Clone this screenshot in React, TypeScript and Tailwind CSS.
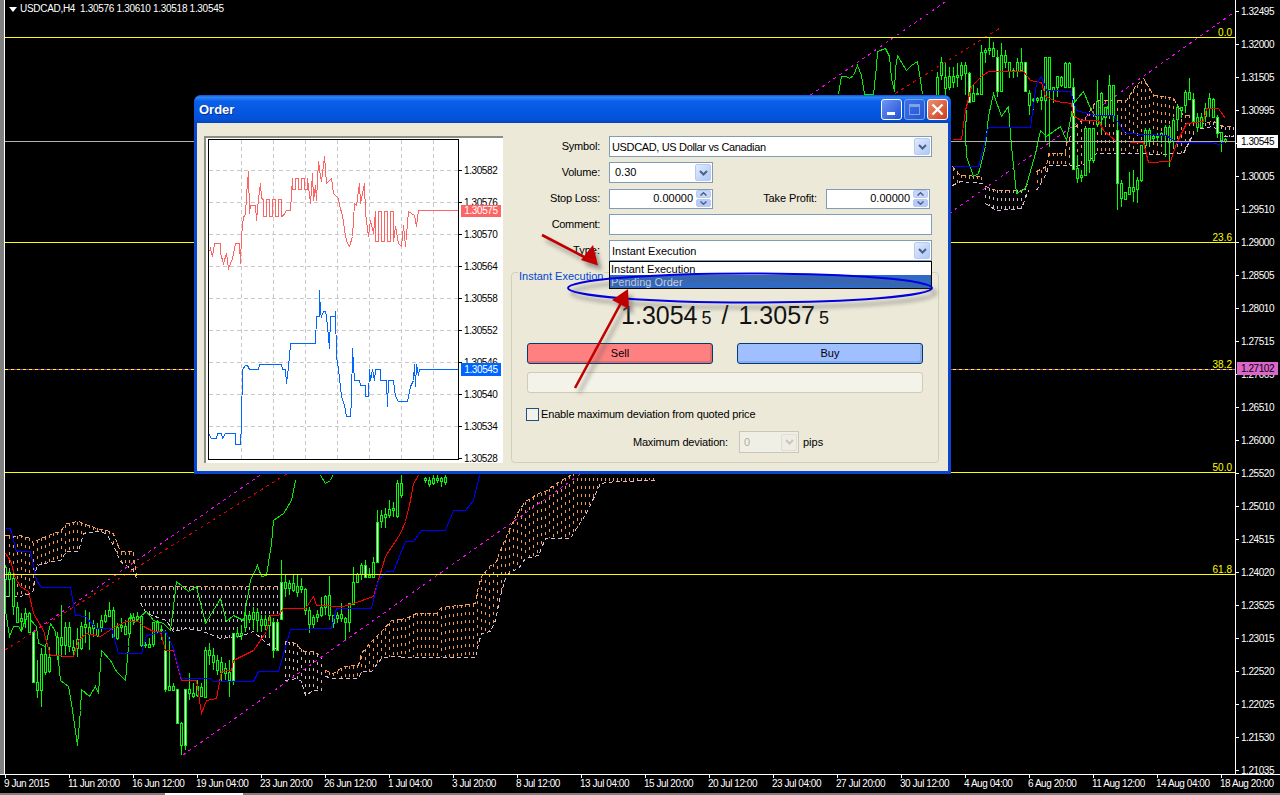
import React from "react";

type Flat = number[];

// chart traces are written in the crop coordinates they were read from (3x), ox/oy moves them back to the page
const pts = (a: Flat, ox: number, oy: number) => {
  const out: string[] = [];
  for (let i = 0; i < a.length; i += 2) {
    out.push(`${Math.floor(ox + a[i] / 3) + 0.5},${Math.floor(oy + a[i + 1] / 3) + 0.5}`);
  }
  return out.join(" ");
};

const zig = (x0: number, x1: number, a: number, b: number, step = 9) => {
  const out: number[] = [];
  let up = true;
  for (let x = x0; x <= x1; x += step) {
    out.push(x, up ? a : b, x, up ? b : a);
    up = !up;
  }
  return out;
};

// the row at 1.305 sits fully under the current price label
const prices = [
  "1.32495", "1.32000", "1.31505", "1.30995", "", "1.30005", "1.29510", "1.29000",
  "1.28505", "1.28010", "1.27515", "1.27005", "1.26510", "1.26000", "1.25520", "1.25010",
  "1.24515", "1.24020", "1.23525", "1.23015", "1.22520", "1.22025", "1.21530", "1.21035",
];

const times = [
  "9 Jun 2015", "11 Jun 20:00", "16 Jun 12:00", "19 Jun 04:00", "23 Jun 20:00", "26 Jun 12:00", "1 Jul 04:00",
  "3 Jul 20:00", "8 Jul 12:00", "13 Jul 04:00", "15 Jul 20:00", "20 Jul 12:00", "23 Jul 04:00", "27 Jul 20:00",
  "30 Jul 12:00", "4 Aug 04:00", "6 Aug 20:00", "11 Aug 12:00", "14 Aug 04:00", "18 Aug 20:00",
];

const miniPrices = ["1.30582", "1.30576", "1.30570", "1.30564", "1.30558", "1.30552", "1.30546", "1.30540", "1.30534", "1.30528"];

// x, high, low, body top, body bottom
const leftCandles: Flat[] = [
  [16, 195, 335, 200, 235], [28, 210, 290, 215, 235], [40, 210, 345, 235, 320], [52, 305, 365, 320, 365],
  [64, 340, 395, 355, 365], [76, 325, 385, 338, 355], [88, 335, 400, 338, 395], [100, 395, 550, 395, 545],
  [112, 480, 595, 545, 570], [124, 445, 620, 462, 570], [136, 440, 525, 462, 515], [148, 440, 520, 472, 515],
  [172, 395, 480, 412, 465], [184, 315, 470, 412, 435], [196, 365, 465, 382, 435], [208, 365, 455, 382, 440],
  [220, 420, 470, 440, 448], [232, 385, 470, 418, 446], [244, 365, 450, 378, 445], [256, 330, 430, 372, 382],
  [268, 335, 450, 380, 400], [280, 360, 410, 375, 385], [292, 370, 410, 385, 405], [304, 345, 395, 360, 380],
  [316, 330, 370, 345, 362], [328, 305, 350, 330, 348], [340, 320, 415, 330, 412], [352, 370, 420, 380, 412],
  [364, 355, 395, 375, 380], [376, 360, 405, 378, 402], [388, 350, 405, 355, 400], [400, 340, 375, 350, 358],
  [412, 335, 365, 348, 358], [424, 345, 440, 348, 435], [436, 425, 445, 433, 437], [448, 415, 445, 432, 440],
  [460, 365, 440, 365, 432], [472, 360, 400, 365, 392], [484, 375, 420, 388, 392], [496, 390, 575, 450, 568],
  [508, 410, 570, 558, 570], [520, 548, 572, 558, 570], [532, 568, 670, 568, 670], [544, 665, 765, 670, 735],
  [556, 568, 750, 568, 735], [568, 520, 600, 568, 580], [580, 550, 595, 580, 590], [592, 540, 590, 558, 585],
  [604, 550, 590, 560, 588], [616, 440, 590, 450, 590], [628, 430, 495, 450, 465], [640, 445, 510, 465, 485],
  [652, 465, 525, 480, 510], [664, 470, 545, 485, 515], [676, 490, 540, 505, 520], [688, 480, 590, 515, 540],
  [700, 400, 555, 400, 540], [712, 385, 415, 400, 410], [724, 375, 420, 400, 405], [736, 335, 395, 345, 380],
  [748, 335, 370, 345, 358], [760, 320, 390, 335, 355], [772, 325, 395, 335, 360], [784, 345, 395, 358, 375],
  [796, 345, 390, 358, 375], [808, 345, 410, 350, 375], [820, 355, 475, 365, 448], [832, 365, 450, 365, 448],
  [844, 180, 360, 245, 355], [856, 225, 290, 245, 262], [868, 240, 285, 248, 262], [880, 225, 275, 250, 272],
  [892, 225, 290, 258, 275], [904, 235, 280, 258, 268], [916, 265, 345, 268, 330], [928, 320, 400, 330, 372],
  [940, 345, 385, 350, 372], [952, 330, 365, 342, 350], [964, 290, 350, 320, 345], [976, 285, 345, 288, 322],
  [988, 228, 360, 285, 345], [1000, 345, 385, 345, 368], [1012, 335, 370, 345, 355], [1024, 310, 365, 342, 355],
  [1036, 350, 420, 355, 368], [1048, 310, 395, 310, 368], [1060, 200, 290, 245, 310], [1072, 220, 250, 222, 245],
  [1084, 190, 240, 195, 222], [1096, 180, 235, 195, 232], [1108, 205, 230, 225, 232], [1120, 170, 225, 185, 230],
  [1132, 30, 190, 65, 185], [1144, 30, 85, 45, 62], [1156, 25, 85, 42, 50], [1168, 0, 55, 28, 46],
  [1180, 5, 50, 25, 32], [1192, -60, 55, -50, 50], [1204, -75, -5, -50, -15], [1276, -70, -50, -65, -58],
  [1288, -70, -40, -60, -48], [1300, -75, -45, -65, -50], [1312, -75, -50, -65, -60], [1324, -70, -40, -65, -55],
  [1336, -75, -45, -70, -55],
];
const leftWhite = [100, 496, 532, 556, 700, 820, 832, 844, 1132, 1096];

const rightCandles: Flat[] = [
  [-8, 215, 285, 230, 285], [4, 170, 240, 185, 225], [16, 190, 290, 230, 262], [28, 200, 270, 228, 260],
  [40, 200, 265, 228, 245], [52, 190, 260, 225, 232], [64, 185, 240, 195, 225], [76, 185, 285, 195, 220],
  [88, 215, 305, 218, 305], [100, 255, 305, 280, 305], [112, 265, 285, 280, 282], [124, 135, 280, 155, 280],
  [136, 145, 190, 150, 155], [148, 115, 165, 145, 150], [160, 125, 170, 145, 170], [172, 150, 290, 170, 272],
  [184, 130, 275, 165, 272], [196, 150, 205, 165, 185], [208, 185, 235, 185, 212], [220, 205, 235, 210, 212],
  [232, 175, 230, 185, 212], [244, 145, 210, 185, 210], [256, 185, 275, 185, 272], [268, 270, 345, 278, 315],
  [280, 295, 330, 298, 302], [292, 290, 310, 295, 300], [304, 270, 330, 292, 300], [316, 170, 425, 172, 300],
  [328, 170, 440, 170, 265], [340, 260, 310, 262, 270], [352, 228, 290, 228, 260], [364, 228, 260, 230, 255],
  [376, 185, 265, 188, 260], [388, 185, 265, 188, 260], [400, 235, 505, 260, 505], [412, 465, 550, 505, 535],
  [424, 510, 545, 525, 532], [436, 380, 525, 385, 525], [448, 385, 520, 385, 480], [460, 385, 490, 385, 480],
  [472, 240, 380, 302, 370], [484, 275, 400, 278, 345], [496, 320, 375, 320, 350], [508, 225, 350, 255, 345],
  [520, 255, 365, 255, 345], [532, 345, 630, 390, 548], [544, 540, 620, 548, 592], [556, 575, 600, 575, 595],
  [568, 515, 585, 560, 580], [580, 510, 605, 560, 572], [592, 530, 610, 540, 568], [604, 435, 545, 435, 540],
  [616, 385, 440, 390, 435], [628, 385, 435, 390, 420], [640, 405, 425, 408, 415], [652, 400, 425, 408, 412],
  [664, 395, 430, 400, 405], [676, 375, 470, 380, 405], [688, 375, 500, 380, 425], [700, 355, 440, 360, 420],
  [712, 315, 390, 320, 355], [724, 320, 355, 320, 330], [736, 270, 340, 275, 315], [748, 235, 300, 275, 295],
  [760, 280, 365, 298, 365], [772, 340, 395, 350, 380], [784, 340, 385, 350, 380], [796, 310, 365, 325, 350],
  [808, 280, 350, 295, 325], [820, 295, 350, 297, 350], [832, 345, 415, 350, 398], [844, 395, 455, 397, 420],
  [856, 415, 430, 418, 425],
];
const rightWhite = [88, 172, 256, 400, 532, 760, 832];

type Cloud = { color: string; ox: number; oy: number; rows: Flat[] };

const clouds: Cloud[] = [
  { color: "#f09858", ox: 0, oy: 500, rows: [[16, 105, 290], [40, 110, 290], [60, 105, 290], [90, 115, 280], [100, 130, 270], [110, 120, 195], [160, 100, 185], [180, 95, 180], [200, 70, 155], [235, 65, 155], [250, 70, 100], [290, 85, 95], [320, 90, 100], [340, 100, 135], [360, 155, 185], [400, 155, 210], [410, 230, 235]] },
  { color: "#cdb6cd", ox: 0, oy: 500, rows: [[420, 260, 310], [440, 260, 340], [500, 260, 360], [520, 260, 395], [560, 260, 385], [600, 260, 390], [660, 260, 415], [720, 260, 410], [760, 260, 395], [800, 260, 430], [835, 260, 450]] },
  { color: "#d8b8b0", ox: 0, oy: 500, rows: [[855, 425, 540], [890, 430, 535], [905, 450, 545], [915, 455, 585], [940, 455, 570], [965, 470, 570]] },
  { color: "#f09858", ox: 0, oy: 500, rows: [[975, 510, 530], [1000, 520, 535], [1030, 500, 535], [1075, 495, 535], [1085, 460, 515], [1115, 425, 515], [1145, 395, 475], [1175, 360, 470], [1200, 358, 470]] },
  { color: "#f09858", ox: 400, oy: 470, rows: [[0, 448, 562], [20, 445, 562], [50, 430, 562], [110, 430, 562], [125, 412, 562], [175, 405, 562], [225, 400, 562], [235, 350, 520], [245, 320, 490], [270, 285, 485], [285, 280, 450], [300, 240, 375], [320, 200, 315], [340, 150, 300], [355, 125, 295], [375, 95, 265], [415, 70, 255], [435, 65, 205], [470, 40, 205], [510, 15, 205], [530, 0, 175], [560, 0, 130], [600, 0, 40], [650, 0, 35], [770, 0, 30]] },
  { color: "#f09858", ox: 940, oy: 0, rows: [[36, 500, 555], [60, 525, 545], [130, 530, 550]] },
  { color: "#cdb6cd", ox: 940, oy: 0, rows: [[135, 560, 610], [170, 570, 630], [245, 570, 625], [265, 550, 570]] },
  { color: "#f09858", ox: 940, oy: 0, rows: [[290, 515, 570], [320, 500, 520], [325, 460, 495], [375, 460, 495], [380, 430, 495], [410, 375, 498], [440, 350, 490], [470, 300, 460], [560, 300, 460], [585, 260, 460], [610, 235, 460], [640, 285, 462], [680, 290, 462], [700, 295, 460], [730, 345, 460], [760, 345, 400]] },
  { color: "#cdb6cd", ox: 940, oy: 0, rows: [[780, 370, 385], [820, 365, 380], [850, 380, 410], [880, 380, 410]] },
];

const greenLeft = [16, 330, 28, 410, 40, 380, 55, 380, 65, 395, 80, 345, 110, 380, 115, 430, 135, 440, 150, 370, 165, 395, 180, 540, 205, 560, 215, 610, 232, 735, 240, 630, 245, 567, 268, 590, 285, 560, 295, 580, 305, 450, 330, 480, 350, 515, 375, 540, 385, 440, 390, 340, 400, 370, 420, 350, 440, 335, 460, 360, 490, 370, 510, 390, 530, 245, 565, 275, 590, 260, 615, 370, 660, 295, 680, 365, 700, 345, 730, 360, 750, 240, 772, 195, 785, 230, 800, 225, 815, 130, 820, 60, 850, 40, 875, 0, 885, -60];
const greenArc = [120, 30, 135, 55, 150, 45, 156, 30];
const greenTop = [115, 282, 125, 230, 140, 230, 148, 235, 160, 225, 172, 195, 185, 225, 192, 282, 220, 282, 228, 200, 233, 155, 255, 145, 268, 170, 275, 235, 282, 275, 285, 205, 292, 165, 318, 212, 335, 195, 352, 185, 360, 240, 367, 282];
const greenRight = [80, 330, 75, 400, 80, 470, 100, 530, 115, 520, 135, 440, 145, 350, 160, 280, 185, 350, 205, 320, 215, 440, 230, 580, 255, 565, 285, 460, 300, 390, 320, 410, 360, 380, 380, 420, 400, 310, 430, 275, 450, 325, 480, 370, 510, 300];
const redLeft = [16, 160, 30, 180, 45, 235, 60, 260, 85, 275, 100, 340, 130, 390, 150, 465, 220, 470, 235, 420, 260, 400, 300, 408, 345, 380, 380, 365, 415, 365, 430, 380, 460, 395, 480, 395, 495, 450, 520, 450, 545, 540, 590, 540, 605, 640, 620, 600, 650, 595, 665, 515, 695, 510, 700, 480, 760, 450, 800, 395, 810, 345, 835, 345, 850, 325, 915, 325, 940, 290, 950, 315, 1030, 320, 1060, 310, 1120, 290, 1155, 170, 1200, 100, 1215, 65, 1230, 0, 1240, -50, 1255, -75];
const blueLeft = [16, 85, 30, 85, 50, 155, 90, 155, 110, 240, 125, 262, 210, 262, 225, 345, 255, 350, 290, 385, 335, 385, 355, 460, 425, 460, 440, 405, 495, 395, 520, 445, 545, 535, 630, 535, 640, 545, 760, 545, 775, 513, 835, 513, 870, 388, 995, 385, 1010, 325, 1115, 325, 1135, 240, 1160, 215, 1180, 215, 1200, 160, 1215, 125, 1240, 125, 1265, 90, 1335, 90, 1360, 32, 1395, 32, 1420, 0, 1438, -75];
const redRight = [36, 418, 65, 418, 75, 330, 95, 260, 125, 230, 145, 215, 250, 215, 270, 240, 305, 248, 315, 290, 350, 305, 395, 310, 400, 345, 420, 360, 475, 362, 490, 390, 530, 425, 610, 428, 625, 488, 690, 483, 710, 430, 740, 370, 790, 365, 800, 325, 835, 325, 855, 355];
const blueRight = [36, 498, 115, 498, 145, 382, 270, 382, 290, 250, 305, 230, 320, 272, 390, 275, 410, 330, 465, 345, 520, 345, 555, 400, 680, 405, 710, 428, 815, 428, 835, 433, 855, 425];

const miniPink = [
  58, 485, 62, 475, 68, 500, 72, 460, 90, 460, 92, 490, 100, 520, 108, 490, 115, 535, 128, 505, 135, 460, 148, 460, 152, 520, 155, 440, 160, 380, 165, 375, 170, 315, 175, 245, 178, 370, 182, 345, 195, 345, 198, 390, 205, 325, 212, 280, 215, 325,
  ...zig(219, 276, 328, 378),
  280, 375, 288, 362, 300, 360,
  ...zig(306, 358, 265, 297),
  360, 340, 367, 250, 370, 330, 375, 285, 380, 330, 384, 215, 390, 260, 395, 275, 403, 200, 408, 280, 425, 265, 430, 310, 445, 325, 448, 345, 458, 375, 465, 440, 472, 460, 478, 470, 488, 440, 492, 340, 500, 345, 508, 280, 512, 340, 522, 280, 527, 370, 535, 440, 540, 390, 550, 430,
  ...zig(555, 610, 365, 455),
  615, 410, 625, 460, 633, 470, 640, 405, 645, 470, 655, 365, 672, 375, 680, 410, 685, 362, 805, 362,
];
const miniBlue = [25, 460, 35, 475, 50, 475, 52, 460, 65, 460, 68, 475, 75, 460, 105, 460, 107, 492, 121, 492, 123, 430, 127, 268, 135, 255, 143, 255, 149, 268, 175, 268, 178, 253, 245, 253, 248, 268, 257, 268, 260, 310, 263, 285, 268, 228, 272, 190, 347, 190, 350, 110, 357, 110, 358, 30, 360, 100, 365, 108, 370, 95, 375, 95, 380, 110, 385, 170, 388, 205, 390, 108, 405, 108, 407, 95, 408, 230, 415, 265, 418, 295, 423, 350, 432, 375, 440, 410, 452, 410, 455, 360, 457, 205, 462, 300, 478, 302, 480, 315, 495, 315, 497, 350, 505, 350, 508, 268, 512, 302, 517, 268, 523, 300, 527, 268, 540, 268, 542, 300, 560, 300, 562, 380, 566, 300, 580, 300, 585, 348, 595, 365, 622, 365, 632, 318, 640, 300, 644, 253, 646, 318, 650, 253, 655, 285, 657, 268, 775, 268];

function Candles({ data, white, ox, oy }: { data: Flat[]; white: number[]; ox: number; oy: number }) {
  return (
    <g shapeRendering="crispEdges">
      {data.map(([x, hi, lo, top, bot]) => {
        const px = Math.round(ox + x / 3);
        const t = Math.round(oy + top / 3);
        const h = Math.max(1, Math.round((bot - top) / 3));
        return (
          <g key={x}>
            <line x1={px + 0.5} x2={px + 0.5} y1={oy + hi / 3} y2={oy + lo / 3} stroke="#00ff00" />
            <rect x={px - 0.5} y={t + 0.5} width={2} height={h} fill={white.includes(x) ? "#ffffff" : "#000000"} stroke="#00ff00" />
          </g>
        );
      })}
    </g>
  );
}

function CloudBand({ cloud }: { cloud: Cloud }) {
  const { rows, ox, oy, color } = cloud;
  const bars: { x: number; a: number; b: number }[] = [];
  for (let i = 0; i < rows.length - 1; i++) {
    const [x0, t0, b0] = rows[i];
    const [x1, t1, b1] = rows[i + 1];
    const from = ox + x0 / 3;
    const to = ox + x1 / 3;
    for (let x = Math.ceil((from - 1) / 4) * 4 + 1; x < to; x += 4) {
      if (x < from) continue;
      const k = (x - from) / (to - from);
      bars.push({ x, a: oy + (t0 + (t1 - t0) * k) / 3, b: oy + (b0 + (b1 - b0) * k) / 3 });
    }
  }
  const top = pts(rows.flatMap((r) => [r[0], r[1]]), ox, oy);
  const bottom = pts(rows.flatMap((r) => [r[0], r[2]]), ox, oy);
  return (
    <g fill="none" shapeRendering="crispEdges">
      {bars.map((b) => (
        <line key={b.x} x1={b.x + 0.5} x2={b.x + 0.5} y1={b.a} y2={b.b} stroke={color} strokeDasharray="3 5" />
      ))}
      <polyline points={top} stroke="#f4a460" strokeDasharray="4 3" />
      <polyline points={bottom} stroke="#d8bfd8" strokeDasharray="4 3" />
    </g>
  );
}

function MainChart() {
  return (
    <svg viewBox="5 0 1230 774" className="absolute inset-0 h-full w-full">
      {clouds.map((c, i) => (
        <CloudBand key={i} cloud={c} />
      ))}
      <g fill="none" shapeRendering="crispEdges">
        <line x1={183} y1={755} x2={1233} y2={13} stroke="#ff00ff" strokeDasharray="3 4" />
        <line x1={33} y1={632} x2={948} y2={0} stroke="#ff00ff" strokeDasharray="3 4" />
        <line x1={5} y1={650} x2={1000} y2={28} stroke="#e00000" strokeDasharray="3 4" />
        <polyline points={pts(greenLeft, 0, 500)} stroke="#00f000" />
        <polyline points={pts(greenArc, 280, 465)} stroke="#00f000" />
        <polyline points={pts(greenTop, 800, 0)} stroke="#00f000" />
        <polyline points={pts(greenRight, 940, 0)} stroke="#00f000" />
      </g>
      <Candles data={leftCandles} white={leftWhite} ox={0} oy={500} />
      <Candles data={rightCandles} white={rightWhite} ox={940} oy={0} />
      <g fill="none" shapeRendering="crispEdges">
        <polyline points={pts(redLeft, 0, 500)} stroke="#ff0000" />
        <polyline points={pts(blueLeft, 0, 500)} stroke="#0000ff" />
        <polyline points={pts(redRight, 940, 0)} stroke="#ff0000" />
        <polyline points={pts(blueRight, 940, 0)} stroke="#0000ff" />
        {[37.5, 242.5, 472.5, 574.5].map((y) => (
          <line key={y} x1={5} x2={1235} y1={y} y2={y} stroke="#ffff00" />
        ))}
        <line x1={5} x2={1235} y1={141.5} y2={141.5} stroke="#b0b0b0" />
        <line x1={5} x2={1235} y1={369.5} y2={369.5} stroke="#b040b0" />
        <line x1={5} x2={1235} y1={369.5} y2={369.5} stroke="#ffff00" strokeDasharray="3 3" />
      </g>
    </svg>
  );
}

function MiniChart() {
  return (
    <svg viewBox="209 140 249 319" className="h-full w-full">
      <g shapeRendering="crispEdges" fill="none">
        {[241.5, 273.5, 305.5, 337.5, 369.5, 401.5, 433.5].map((x) => (
          <line key={x} x1={x} x2={x} y1={140} y2={459} stroke="#c8c8c8" strokeDasharray="4 3" />
        ))}
        {[170.5, 202.5, 234.5, 266.5, 298.5, 330.5, 362.5, 394.5, 426.5].map((y) => (
          <line key={y} x1={209} x2={458} y1={y} y2={y} stroke="#c8c8c8" strokeDasharray="4 3" />
        ))}
        <polyline points={pts(miniPink, 190, 90)} stroke="#ff6464" />
        <polyline points={pts(miniBlue, 200, 280)} stroke="#0066ff" />
      </g>
    </svg>
  );
}

function ComboButton({ disabled }: { disabled?: boolean }) {
  return (
    <div
      className={
        disabled
          ? "flex h-[17px] w-[16px] items-center justify-center rounded-[2px] border border-[#e0ded2] bg-[#eeede5]"
          : "flex h-[17px] w-[16px] items-center justify-center rounded-[2px] border border-[#b9c9f0] bg-[linear-gradient(135deg,#e1eafe,#aec8f7)]"
      }
    >
      <svg width="9" height="6" viewBox="0 0 9 6" fill="none">
        <path d="M1 1 L4.5 4.5 L8 1" stroke={disabled ? "#c9c7ba" : "#4d6185"} strokeWidth="2" />
      </svg>
    </div>
  );
}

function SpinButton() {
  return (
    <div className="flex h-[17px] w-[15px] flex-col gap-px">
      <div className="flex h-[8px] items-center justify-center rounded-[2px] border border-[#b9c9f0] bg-[#c6d6fb]">
        <svg width="7" height="4" viewBox="0 0 7 4" fill="none">
          <path d="M0.5 3.5 L3.5 0.8 L6.5 3.5" stroke="#4d6185" strokeWidth="1.5" />
        </svg>
      </div>
      <div className="flex h-[8px] items-center justify-center rounded-[2px] border border-[#b9c9f0] bg-[#b6cbf8]">
        <svg width="7" height="4" viewBox="0 0 7 4" fill="none">
          <path d="M0.5 0.5 L3.5 3.2 L6.5 0.5" stroke="#4d6185" strokeWidth="1.5" />
        </svg>
      </div>
    </div>
  );
}

function SpinField({ value }: { value: string }) {
  return (
    <div className="flex h-[20px] w-[104px] items-center justify-end gap-[3px] border border-[#7f9db9] bg-white pr-px">
      <span>{value}</span>
      <SpinButton />
    </div>
  );
}

function TitleBar() {
  return (
    <div className="flex h-[28px] items-center justify-between rounded-t-[7px] bg-[linear-gradient(180deg,#0a50d8_0%,#2f86f5_8%,#0a5fe8_22%,#0458e0_60%,#0552d8_85%,#0346bd_100%)] pl-[5px] pr-[3px]">
      <span className="text-[13px] font-bold text-white [text-shadow:1px_1px_0_#0a2f8c]">Order</span>
      <div className="flex gap-[2px]">
        <div className="flex h-[21px] w-[21px] items-end rounded-[3px] border border-white bg-[linear-gradient(135deg,#6f95f5,#2050d8)] pb-[4px] pl-[5px]">
          <div className="h-[3px] w-[8px] bg-white" />
        </div>
        <div className="flex h-[21px] w-[21px] items-center justify-center rounded-[3px] border border-[#7da2ee] bg-[linear-gradient(135deg,#3f72e6,#2356cf)]">
          <div className="h-[11px] w-[11px] border border-[#7da2ee] border-t-[3px]" />
        </div>
        <div className="flex h-[21px] w-[21px] items-center justify-center rounded-[3px] border border-white bg-[linear-gradient(135deg,#ec8f72,#cf3d17)]">
          <svg width="13" height="13" viewBox="0 0 13 13" fill="none">
            <path d="M1.5 1.5 L11.5 11.5 M11.5 1.5 L1.5 11.5" stroke="white" strokeWidth="2.4" />
          </svg>
        </div>
      </div>
    </div>
  );
}

function ChartPanel() {
  return (
    <div className="relative flex h-[327px] w-[299px] border-l-2 border-t-2 border-[#8c8c84] bg-white pl-[2px] pt-px">
      <div className="h-[321px] w-[251px] border border-black">
        <MiniChart />
      </div>
      <div className="-mt-[1px] flex flex-col pt-[16px]">
        {miniPrices.map((p) => (
          <div key={p} className="flex h-[32px] shrink-0 items-center gap-[2px] text-[10px] tracking-[-0.4px]">
            <div className="h-px w-[3px] bg-black" />
            <span>{p}</span>
          </div>
        ))}
      </div>
      <div className="absolute left-[255px] top-[67px] h-[12px] w-[40px] bg-[#ff6464] text-center text-[10px] leading-[12px] tracking-[-0.4px] text-white">
        1.30575
      </div>
      <div className="absolute left-[255px] top-[225px] h-[13px] w-[40px] bg-[#0066ff] text-center text-[10px] leading-[13px] tracking-[-0.4px] text-white">
        1.30545
      </div>
    </div>
  );
}

function OrderForm() {
  return (
    <div className="flex w-[428px] flex-col">
      <div className="flex flex-col gap-[5px]">
        <div className="flex h-[21px] items-center gap-[9px]">
          <label className="w-[89px] text-right tracking-[-0.2px]">Symbol:</label>
          <div className="flex h-[21px] w-[323px] items-center justify-between border border-[#7f9db9] bg-white pl-[2px] pr-px">
            <span className="translate-y-px tracking-[-0.35px]">USDCAD, US Dollar vs Canadian</span>
            <ComboButton />
          </div>
        </div>
        <div className="flex h-[21px] items-center gap-[9px]">
          <label className="w-[89px] text-right tracking-[-0.2px]">Volume:</label>
          <div className="flex h-[21px] w-[104px] items-center justify-between border border-[#7f9db9] bg-white pl-[5px] pr-px">
            <span>0.30</span>
            <ComboButton />
          </div>
        </div>
        <div className="flex h-[21px] items-center gap-[9px] pr-[9px]">
          <label className="w-[89px] text-right tracking-[-0.2px]">Stop Loss:</label>
          <SpinField value="0.00000" />
          <label className="flex-1 text-right tracking-[-0.1px]">Take Profit:</label>
          <SpinField value="0.00000" />
        </div>
        <div className="flex h-[21px] items-center gap-[9px]">
          <label className="w-[89px] text-right tracking-[-0.3px]">Comment:</label>
          <div className="h-[21px] w-[323px] border border-[#7f9db9] bg-white" />
        </div>
        <div className="relative flex h-[21px] items-center gap-[9px]">
          <label className="w-[89px] text-right">Type:</label>
          <div className="flex h-[21px] w-[323px] items-center justify-between border border-[#7f9db9] bg-white pl-[2px] pr-px">
            <span className="translate-y-px">Instant Execution</span>
            <ComboButton />
          </div>
          <div className="absolute left-[98px] top-[21px] z-10 flex w-[323px] flex-col border border-black bg-white">
            <div className="h-[13px] pl-px leading-[14px]">Instant Execution</div>
            <div className="h-[13px] bg-[#316ac5] pl-px leading-[14px] text-[#d5dff2]">Pending Order</div>
          </div>
        </div>
      </div>
      <div className="relative mt-[11px] flex h-[191px] flex-col rounded-[4px] border border-[#d0d0bf] pl-[15px] pr-[15px]">
        <span className="absolute -top-[3px] left-[6px] bg-[#ece9d8] px-px leading-[12px] text-[#0046d5]">Instant Execution</span>
        <div className="mt-[28px] flex h-[28px] items-baseline justify-center gap-[10px] text-[25px] leading-[28px] text-[#111]">
          <span>
            1.3054<span className="ml-[4px] text-[18px]">5</span>
          </span>
          <span>/</span>
          <span>
            1.3057<span className="ml-[4px] text-[18px]">5</span>
          </span>
        </div>
        <div className="mt-[14px] flex gap-[24px]">
          <div className="flex h-[21px] w-[186px] items-center justify-center rounded-[3px] border border-[#003c74] bg-[#ff8080] shadow-[inset_-2px_-2px_0_#e07070]">Sell</div>
          <div className="flex h-[21px] w-[186px] items-center justify-center rounded-[3px] border border-[#003c74] bg-[#a0bfff] shadow-[inset_-2px_-2px_0_#8cabee]">Buy</div>
        </div>
        <div className="mt-[8px] h-[21px] w-[396px] rounded-[3px] border border-[#cfcbb8] bg-[#f4f3ea]" />
        <div className="-ml-px mt-[15px] flex h-[13px] items-center gap-[2px]">
          <div className="h-[13px] w-[13px] border border-[#1c5180] bg-[#f2f1ea]" />
          <span className="tracking-[-0.15px]">Enable maximum deviation from quoted price</span>
        </div>
        <div className="mt-[10px] flex h-[22px] items-center">
          <span className="w-[201px] text-right tracking-[-0.15px]">Maximum deviation:</span>
          <div className="ml-[11px] flex h-[22px] w-[60px] items-center justify-between border border-[#cbc7b8] bg-[#f0efe6] pl-[4px] pr-px text-[#b0aea2]">
            <span>0</span>
            <ComboButton disabled />
          </div>
          <span className="ml-[4px]">pips</span>
        </div>
      </div>
    </div>
  );
}

function Annotations() {
  const shapes = (
    <>
      <path d="M542 235 L590 260" fill="none" stroke="currentColor" strokeWidth="2.6" />
      <path d="M598 265.5 L581 260 L593 245 Z" fill="currentColor" />
      <path d="M575 388 L621 303" fill="none" stroke="currentColor" strokeWidth="2.6" />
      <path d="M628 289 L629 309 L612 300 Z" fill="currentColor" />
    </>
  );
  return (
    <svg viewBox="0 0 1280 795" className="pointer-events-none absolute inset-0 z-20 h-[795px] w-[1280px]">
      <defs>
        <filter id="soft" x="-10%" y="-30%" width="120%" height="160%">
          <feGaussianBlur stdDeviation="2" />
        </filter>
      </defs>
      <g filter="url(#soft)" transform="translate(4 5)" className="text-[#555]" opacity="0.55">
        <ellipse cx="750" cy="288" rx="182" ry="14.5" fill="none" stroke="currentColor" strokeWidth="2.5" />
        {shapes}
      </g>
      <ellipse cx="750" cy="288" rx="182" ry="14.5" fill="none" stroke="#0000e0" strokeWidth="2" />
      <g className="text-[#c00000]">{shapes}</g>
    </svg>
  );
}

export default function App() {
  return (
    <div className="relative flex h-[795px] w-[1280px] flex-col overflow-hidden bg-black font-['Liberation_Sans',sans-serif]">
      <div className="flex h-[774px]">
        <div className="w-[4px] bg-[#808080]" />
        <div className="relative flex-1 border-l border-white">
          <MainChart />
          <div className="absolute left-[4px] top-[4px] flex items-center gap-[3px] text-[10px] leading-[10px] tracking-[-0.3px] text-white">
            <svg width="8" height="5" viewBox="0 0 8 5">
              <path d="M0 0 H8 L4 5 Z" fill="white" />
            </svg>
            <span>USDCAD,H4&nbsp;&nbsp;1.30576 1.30610 1.30518 1.30545</span>
          </div>
          <span className="absolute right-[3px] top-[27px] text-[10px] leading-[11px] text-[#ffff00]">0.0</span>
          <span className="absolute right-[3px] top-[232px] text-[10px] leading-[11px] text-[#ffff00]">23.6</span>
          <span className="absolute right-[3px] top-[359px] text-[10px] leading-[11px] text-[#ffff00]">38.2</span>
          <span className="absolute right-[3px] top-[462px] text-[10px] leading-[11px] text-[#ffff00]">50.0</span>
          <span className="absolute right-[3px] top-[564px] text-[10px] leading-[11px] text-[#ffff00]">61.8</span>
        </div>
        <div className="relative w-[45px] border-l border-white">
          <div className="-mt-[5px] flex flex-col">
            {prices.map((p, i) => (
              <div key={i} className="flex h-[33px] shrink-0 items-center gap-[2px] text-[10px] tracking-[-0.45px] text-white">
                <div className="h-px w-[3px] bg-white" />
                <span>{p}</span>
              </div>
            ))}
          </div>
          <div className="absolute left-px top-[135px] h-[13px] w-[41px] bg-white text-center text-[10px] leading-[13px] tracking-[-0.45px] text-black">
            1.30545
          </div>
          <div className="absolute left-px top-[362px] h-[13px] w-[41px] bg-[#dd66cc] text-center text-[10px] leading-[13px] tracking-[-0.45px] text-black">
            1.27102
          </div>
        </div>
      </div>
      <div className="flex h-[19px] border-t border-white pl-[5px]">
        {times.map((t) => (
          <div key={t} className="flex w-[64px] shrink-0 flex-col">
            <div className="h-[3px] w-px bg-white" />
            <span className="-ml-px whitespace-nowrap text-[10px] leading-[12px] tracking-[-0.45px] text-white">{t}</span>
          </div>
        ))}
      </div>
      <div className="flex h-[2px] bg-[#808080]">
        <div className="ml-[165px] w-[78px] bg-white" />
      </div>

      <div className="absolute left-[194px] top-[95px] flex h-[379px] w-[757px] flex-col rounded-t-[7px] bg-[#0a45d0] text-[11px] leading-[13px] text-black">
        <TitleBar />
        <div className="mx-[3px] mb-[3px] flex flex-1 gap-[8px] bg-[#ece9d8] pl-[7px] pt-[13px]">
          <ChartPanel />
          <OrderForm />
        </div>
      </div>
      <Annotations />
    </div>
  );
}
